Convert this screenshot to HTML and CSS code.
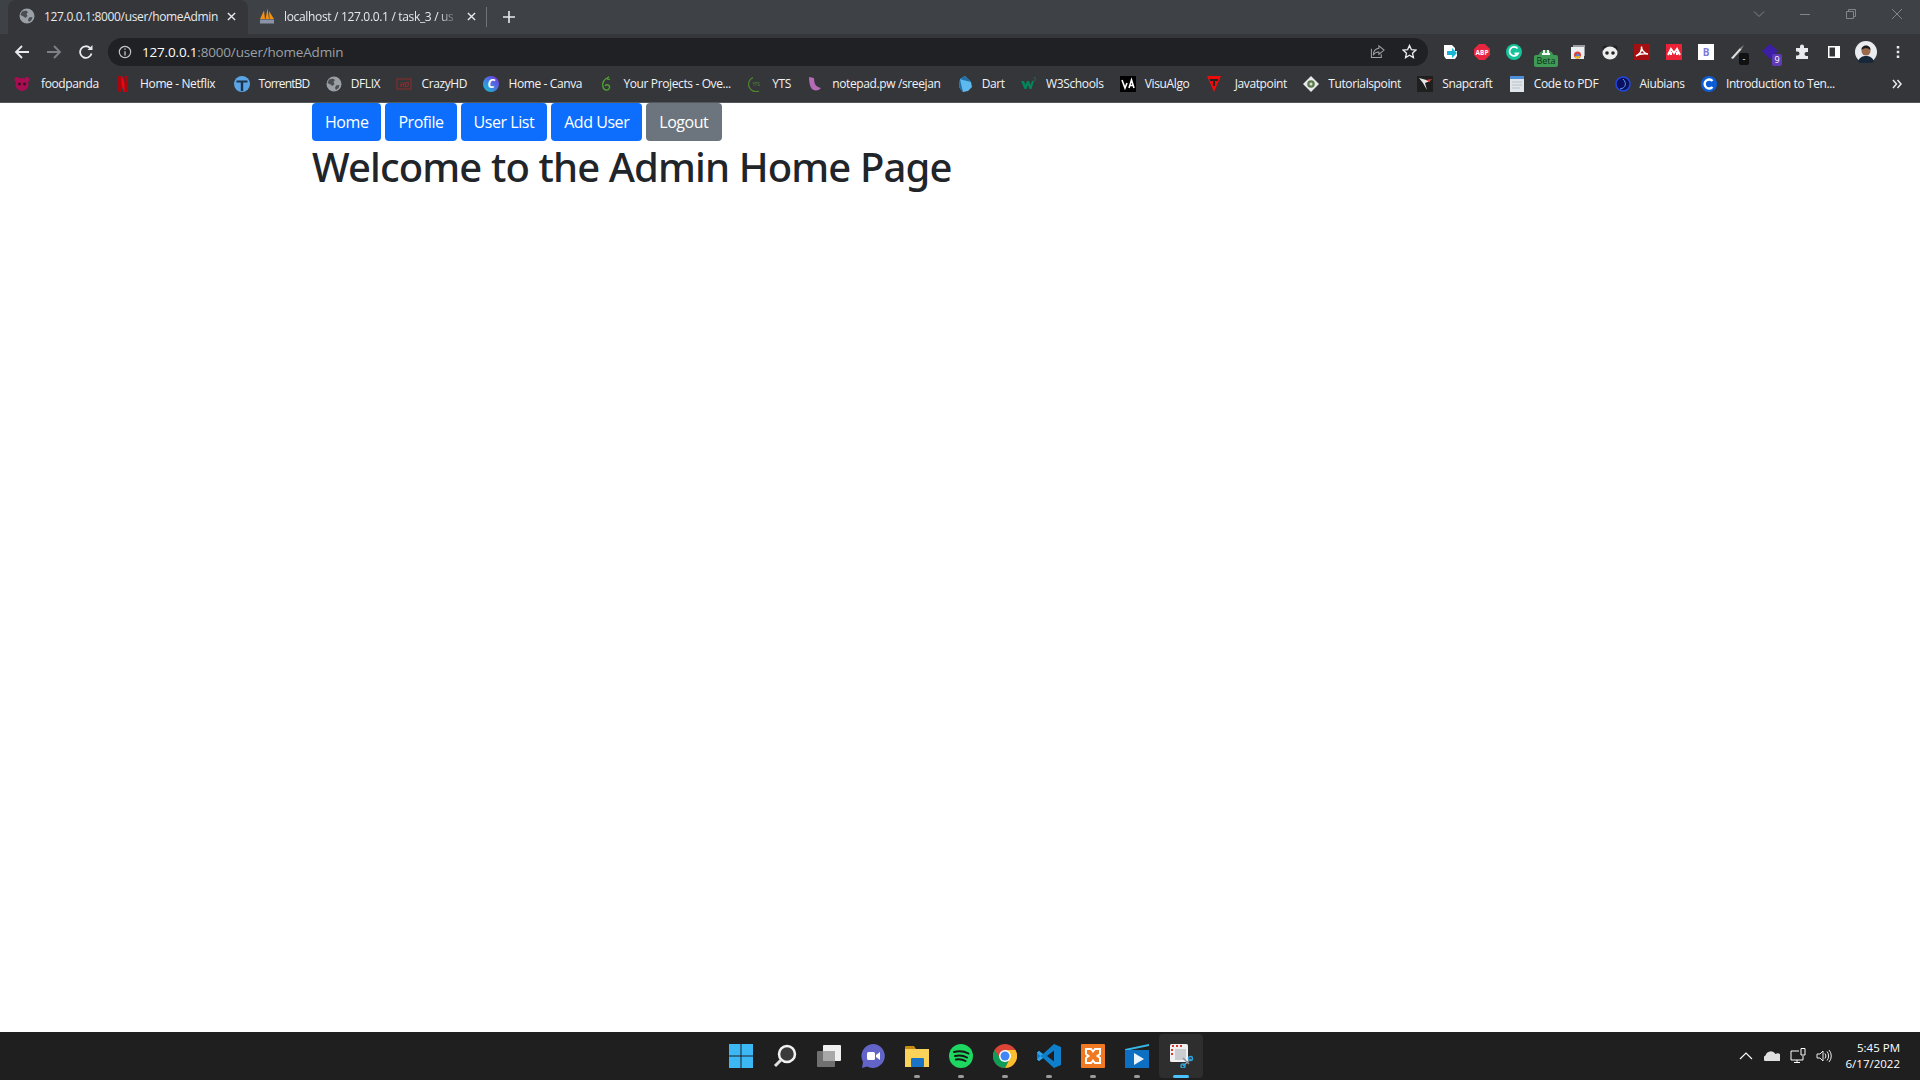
FILE: index.html
```html
<!DOCTYPE html>
<html lang="en">
    <head>
        <meta charset="utf-8">
        <title>127.0.0.1:8000/user/homeAdmin</title>
        <link rel="stylesheet" href="styles.css">
    </head>
    <body>
        <div class="browser">
            <!-- Tab strip -->
            <div class="tabstrip">
                <div class="tab tab-active">
                    <svg class="fav" viewBox="0 0 16 16"><circle cx="8" cy="8" r="7.5" fill="#9aa0a6"/><path d="M3 3.5 7 2.5 9 4 7.5 6 8.5 8 6.5 10 4.5 8.5 1.5 7ZM10 9.5 13.5 9 12.5 12 10 14 9 12Z" fill="#4a4d51"/></svg>
                    <span class="tab-title">127.0.0.1:8000/user/homeAdmin</span>
                    <svg class="tab-close" viewBox="0 0 10 10"><path d="M1 1 9 9M9 1 1 9" stroke="#e8eaed" stroke-width="1.5"/></svg>
                </div>
                <div class="tab">
                    <svg class="fav" viewBox="0 0 16 16"><path d="M1 11 5 2.500 6 11ZM6.500 11 8.500 .5 10 11ZM10.500 11 10 3 15 11Z" fill="#f29111"/><rect x="1" y="11.500" width="14" height="4" fill="#8a94a6"/></svg>
                    <span class="tab-title tab-fade">localhost / 127.0.0.1 / task_3 / us</span>
                    <svg class="tab-close" viewBox="0 0 10 10"><path d="M1 1 9 9M9 1 1 9" stroke="#e8eaed" stroke-width="1.5"/></svg>
                </div>
                <div class="tab-sep"></div>
                <svg class="new-tab" viewBox="0 0 12 12"><path d="M6 0V12M0 6H12" stroke="#e8eaed" stroke-width="1.6"/></svg>
                <div class="window-controls">
                    <svg viewBox="0 0 12 12"><path d="M1 3.500 6 8.500 11 3.500" fill="none" stroke="#80868b"/></svg>
                    <svg viewBox="0 0 12 12"><path d="M1 6.500H11" stroke="#80868b"/></svg>
                    <svg viewBox="0 0 12 12"><path d="M1.500 3.500H8.500V10.500H1.500ZM3.500 3.500V1.500H10.500V8.500H8.500" fill="none" stroke="#80868b"/></svg>
                    <svg viewBox="0 0 12 12"><path d="M1 1 11 11M11 1 1 11" stroke="#80868b"/></svg>
                </div>
            </div>

            <!-- Address bar and extensions -->
            <div class="toolbar">
                <svg class="nav" viewBox="0 0 16 16"><path d="M15 8H2M8 2 2 8 8 14" fill="none" stroke="#e8eaed" stroke-width="1.8"/></svg>
                <svg class="nav" viewBox="0 0 16 16"><path d="M1 8H14M8 2 14 8 8 14" fill="none" stroke="#7d8185" stroke-width="1.8"/></svg>
                <svg class="nav" viewBox="0 0 16 16"><path d="M13.500 9.500A5.800 5.800 0 1 1 12 4" fill="none" stroke="#e8eaed" stroke-width="1.8"/><path d="M9.500 6H14.500V1Z" fill="#e8eaed"/></svg>
                <div class="omnibox">
                    <svg class="info" viewBox="0 0 16 16"><circle cx="8" cy="8" r="6.500" fill="none" stroke="#c4c7c9" stroke-width="1.300"/><path d="M8 7V12M8 4V5.500" stroke="#c4c7c9" stroke-width="1.500"/></svg>
                    <span class="url"><b>127.0.0.1</b>:8000/user/homeAdmin</span>
                    <svg class="omni-action" viewBox="0 0 16 16"><path d="M9.500 2 15 6.500 9.500 11V8.500C6.500 8.500 4.500 9.500 3.500 12 3.500 8 6 5 9.500 4.500ZM1.500 5V14.500H12V11" fill="none" stroke="#9fa3a7" stroke-width="1.100"/></svg>
                    <svg class="omni-action" viewBox="0 0 16 16"><path d="M8 1.500 10 6 14.800 6.500 11.200 9.800 12.200 14.500 8 12 3.800 14.500 4.800 9.800 1.200 6.500 6 6Z" fill="none" stroke="#e8eaed" stroke-width="1.400"/></svg>
                </div>
                <div class="extensions">
                    <span class="ext"><svg viewBox="0 0 16 16"><path d="M2 1H10L13 4V7H15V12L13 15H4L2 12Z" fill="#fff"/><path d="M5 7H10V4L15 9 10 14V11H5Z" fill="#19b5d8"/></svg></span>
                    <span class="ext"><svg viewBox="0 0 16 16"><path d="M5 0H11L16 5V11L11 16H5L0 11V5Z" fill="#e8263f"/><text x="8" y="10.500" class="ext-text">ABP</text></svg></span>
                    <span class="ext"><svg viewBox="0 0 16 16"><circle cx="8" cy="8" r="8" fill="#15c39a"/><path d="M11.500 4.500A4.500 4.500 0 1 0 12 9.500H8.500" fill="none" stroke="#fff" stroke-width="1.800"/></svg></span>
                    <span class="ext ext-beta"><svg viewBox="0 0 16 16"><path d="M0 14A8 8 0 0 1 16 14Z" fill="#3f9a56"/><path d="M6 6V10M10 6V10M4 10H12" stroke="#fff" stroke-width="1.800"/></svg><span class="badge-beta">Beta</span></span>
                    <span class="ext"><svg viewBox="0 0 16 16"><rect x="3" y="1" width="12" height="11" fill="#9a9da0"/><rect x="1" y="3" width="13" height="12" fill="#eceff1"/><circle cx="7.500" cy="11" r="3.500" fill="#e34133"/><path d="M7.500 11 4.500 13 7 15 11 12.500Z" fill="#f4c20d"/><circle cx="7.500" cy="11" r="1.500" fill="#4285f4"/></svg></span>
                    <span class="ext"><svg viewBox="0 0 16 16"><circle cx="3" cy="4" r="2.500" fill="#222"/><circle cx="13" cy="4" r="2.500" fill="#222"/><ellipse cx="8" cy="9" rx="7.500" ry="6.500" fill="#eee"/><circle cx="5" cy="9" r="1.800" fill="#222"/><circle cx="11" cy="9" r="1.800" fill="#222"/></svg></span>
                    <span class="ext"><svg viewBox="0 0 16 16"><rect width="16" height="16" fill="#a50f0f"/><path d="M2 12C6 10 8 6 7.500 2.500 7 6 11 10 14 10 10 9.500 5 10 2 12Z" fill="none" stroke="#fff" stroke-width="1.500"/></svg></span>
                    <span class="ext"><svg viewBox="0 0 16 16"><rect width="16" height="16" fill="#ec2136"/><path d="M2 11 5 5 8 9 11 5 14 11M5 11V8M11 11V8" fill="none" stroke="#fff" stroke-width="2"/></svg></span>
                    <span class="ext"><svg viewBox="0 0 16 16"><rect width="16" height="16" fill="#fff"/><text x="8" y="11.500" class="ext-b">B</text></svg></span>
                    <span class="ext ext-knife"><svg viewBox="0 0 16 16"><path d="M1 14 10 4 11.500 5.500 3 15Z" fill="#ddd"/><path d="M10 4 14 1 11.500 5.500Z" fill="#888"/></svg><span class="badge-dark">-</span></span>
                    <span class="ext ext-purple"><svg viewBox="0 0 16 16"><path d="M8 0 16 7 8 15 0 7Z" fill="#3c1fa6"/></svg><span class="badge-num">9</span></span>
                    <span class="ext"><svg viewBox="0 0 16 16"><path d="M6 2.500A2 2 0 0 1 10 2.500V4H14V8H12.500A2 2 0 0 0 12.500 12H14V15H2V11.500H3.500A2 2 0 0 0 3.500 7.500H2V4H6Z" fill="#e8eaed"/></svg></span>
                    <span class="ext"><svg viewBox="0 0 16 16"><path d="M2 2H14V14H2ZM3.500 3.500V12.500H9V3.500Z" fill="#fff" fill-rule="evenodd"/></svg></span>
                    <span class="ext"><svg class="avatar" viewBox="0 0 22 22"><circle cx="11" cy="11" r="11" fill="#e9edf0"/><path d="M3 21C4 16 8 15 11 15 14 15 18 16 19 21 15 23 7 23 3 21Z" fill="#17283a"/><circle cx="11" cy="10" r="4.500" fill="#9a6a4d"/><path d="M6.500 9C6 3 16 3 15.500 9 13 6.500 9 6.500 6.500 9Z" fill="#1c1a1a"/></svg></span>
                    <span class="ext"><svg viewBox="0 0 16 16"><path d="M8 2V4.500M8 6.800V9.300M8 11.500V14" stroke="#e8eaed" stroke-width="2.500"/></svg></span>
                </div>
            </div>

            <!-- Bookmarks bar -->
            <div class="bookmarks">
                <span class="bm bm-spaced"><svg viewBox="0 0 16 16"><circle cx="3" cy="3.500" r="2.500" fill="#a90e52"/><circle cx="13" cy="3.500" r="2.500" fill="#a90e52"/><circle cx="8" cy="8.500" r="6.500" fill="#a90e52"/><circle cx="5.500" cy="8" r="1.500" fill="#3a1020"/><circle cx="10.500" cy="8" r="1.500" fill="#3a1020"/></svg>foodpanda</span>
                <span class="bm"><svg viewBox="0 0 16 16"><path d="M3 0H7L13 16H9Z" fill="#e50914"/><path d="M3 0H6.500V16L3 15.500ZM9.500 0H13V15.500L9.500 16Z" fill="#a80710"/></svg>Home - Netflix</span>
                <span class="bm bm-narrow"><svg viewBox="0 0 16 16"><circle cx="8" cy="8" r="8" fill="#5ba5e6"/><path d="M2.500 4.500H13.500V6.500H9.200V15H6.800V6.500H2.500Z" fill="#1f3346"/></svg>TorrentBD</span>
                <span class="bm"><svg viewBox="0 0 16 16"><circle cx="8" cy="8" r="7.500" fill="#9aa0a6"/><path d="M3 3.500 7 2.500 9 4 7.500 6 8.500 8 6.500 10 4.500 8.500 1.500 7ZM10 9.500 13.500 9 12.500 12 10 14 9 12Z" fill="#4a4d51"/></svg>DFLIX</span>
                <span class="bm"><svg viewBox="0 0 16 16"><rect x="1" y="3" width="14" height="10" fill="none" stroke="#8c2a2a"/><text x="8" y="11" class="bm-hd">HD</text></svg>CrazyHD</span>
                <span class="bm"><svg viewBox="0 0 16 16"><defs><linearGradient id="canva" x1="0" y1="1" x2="1" y2="0"><stop offset="0" stop-color="#12c8d4"/><stop offset="1" stop-color="#7d2ae8"/></linearGradient></defs><circle cx="8" cy="8" r="8" fill="url(#canva)"/><text x="8" y="12" class="bm-c">C</text></svg>Home - Canva</span>
                <span class="bm"><svg viewBox="0 0 16 16"><path d="M11 1C6 3 4 7 5 11 6 15 11 15 11.500 11.500 12 8.500 8 8 7 10M11 1C8 2 9 4 12 3" fill="none" stroke="#4ca82f" stroke-width="1.300"/></svg>Your Projects - Ove...</span>
                <span class="bm"><svg viewBox="0 0 16 16"><path d="M6 1.500A7 7 0 0 0 12 15" fill="none" stroke="#4f8a2e" stroke-width="1.200"/><text x="9" y="10" class="bm-yts">YTS</text></svg>YTS</span>
                <span class="bm"><svg viewBox="0 0 16 16"><path d="M2 1 7 2C7 8 9 11 14 12 12 15 7 15 5 13 3 11 2 6 2 1Z" fill="#b56bb5"/></svg>notepad.pw /sreejan</span>
                <span class="bm"><svg viewBox="0 0 16 16"><path d="M3 3 8 0 14 6 15 11 11 15 6 16 2 11Z" fill="#5db9ee"/><path d="M3 3 2 11 6 16 4 8ZM3 3 8 0 14 6 6 4Z" fill="#1f6fa8"/></svg>Dart</span>
                <span class="bm"><svg viewBox="0 0 16 16"><path d="M0 5H3L4.500 9 6 5H8L9.500 9 11 5H13L10.500 13H8.500L7 9 5.500 13H3.500Z" fill="#04845a"/><text x="13.500" y="5" class="bm-w3">3</text></svg>W3Schools</span>
                <span class="bm"><svg viewBox="0 0 16 16"><rect width="16" height="16" fill="#000"/><path d="M2 4 5 12 7 7M9 12 11.500 4 14 12M10 9.500H13" fill="none" stroke="#fff" stroke-width="1.600"/></svg>VisuAlgo</span>
                <span class="bm bm-spaced-more"><svg viewBox="0 0 16 16"><path d="M1 0H15L8 16Z" fill="#f00b0b"/><path d="M4 3H12V5H9V10H7V5H4Z" fill="#222"/></svg>Javatpoint</span>
                <span class="bm"><svg viewBox="0 0 16 16"><path d="M8 0 16 8 8 16 0 8Z" fill="#e9e9e9"/><circle cx="8" cy="8" r="3.800" fill="#5c7a4b"/><circle cx="8" cy="8" r="1.500" fill="#ddd"/></svg>Tutorialspoint</span>
                <span class="bm"><svg viewBox="0 0 16 16"><rect width="16" height="16" fill="#1f1f1f"/><path d="M2 2 13 5 8 7 10 14 6 7Z" fill="#e8e8e8"/><path d="M9 4 15 3 12 6Z" fill="#e23b2e"/></svg>Snapcraft</span>
                <span class="bm"><svg viewBox="0 0 16 16"><rect x="1" y="0" width="14" height="16" fill="#dfe5ea"/><rect x="1" y="0" width="14" height="3" fill="#4d8fd8"/><path d="M3 6H13M3 9H13M3 12H11" stroke="#b9c1c8"/></svg>Code to PDF</span>
                <span class="bm"><svg viewBox="0 0 16 16"><circle cx="8" cy="8" r="7" fill="#0b1160" stroke="#2346e0" stroke-width="1.500"/><path d="M5 13C11 12 12 7 8 3" fill="none" stroke="#5a9cf0"/></svg>Aiubians</span>
                <span class="bm"><svg viewBox="0 0 16 16"><circle cx="8" cy="8" r="8" fill="#0b5ed7"/><path d="M11.500 5A4.500 4.500 0 1 0 11.500 11" fill="none" stroke="#fff" stroke-width="2.400"/></svg>Introduction to Ten...</span>
                <svg class="bm-more" viewBox="0 0 10 10"><path d="M1 1 4.500 5 1 9M5.500 1 9 5 5.500 9" fill="none" stroke="#e8eaed" stroke-width="1.500"/></svg>
            </div>

            <main class="page">
                <nav class="page-nav">
                    <a class="btn" href="#">Home</a>
                    <a class="btn" href="#">Profile</a>
                    <a class="btn" href="#">User List</a>
                    <a class="btn" href="#">Add User</a>
                    <a class="btn btn-grey" href="#">Logout</a>
                </nav>
                <h1>Welcome to the Admin Home Page</h1>
            </main>

            <!-- Windows taskbar -->
            <footer class="taskbar">
                <div class="task-spacer"></div>
                <div class="task-apps">
                    <span class="app"><svg viewBox="0 0 24 24"><path d="M0 0H11.500V11.500H0ZM12.500 0H24V11.500H12.500ZM0 12.500H11.500V24H0ZM12.500 12.500H24V24H12.500Z" fill="#3cb9f5"/></svg></span>
                    <span class="app"><svg viewBox="0 0 24 24"><circle cx="14" cy="10" r="8" fill="#3a3a3a" stroke="#f2f2f2" stroke-width="2.500"/><path d="M8 16 2 22" stroke="#e0e0e0" stroke-width="3"/></svg></span>
                    <span class="app"><svg viewBox="0 0 24 24"><rect x="0" y="7" width="18" height="16" rx="1" fill="#707070"/><rect x="6" y="1" width="18" height="16" rx="1" fill="#f0f0f0"/><rect x="6" y="7" width="12" height="10" fill="#a8a8a8"/></svg></span>
                    <span class="app"><svg viewBox="0 0 24 24"><path d="M12 0A12 12 0 1 1 6 22.500L1 24 2 18A12 12 0 0 1 12 0Z" fill="#6264c7"/><rect x="6" y="8" width="8" height="8" rx="1.500" fill="#fff"/><path d="M15 11 19 8V16L15 13Z" fill="#fff"/></svg></span>
                    <span class="app app-open"><svg viewBox="0 0 24 24"><path d="M0 3A1 1 0 0 1 1 2H9L11 5H0Z" fill="#c98c12"/><path d="M0 5H24V23H0Z" fill="#fcd35a"/><rect x="6" y="14" width="13" height="9" rx="1" fill="#1a73c7"/></svg></span>
                    <span class="app app-open"><svg viewBox="0 0 24 24"><circle cx="12" cy="12" r="12" fill="#1ed760"/><path d="M5 8C10 6.500 15 7 19.500 9.500M6 12C10 11 14.500 11.500 18 13.500M7 15.500C10.500 15 14 15.500 16.500 17" fill="none" stroke="#191414" stroke-width="2" stroke-linecap="round"/></svg></span>
                    <span class="app app-open"><svg viewBox="0 0 24 24"><circle cx="12" cy="12" r="12" fill="#db4437"/><path d="M12 24A12 12 0 0 0 22.400 6H12L17 14Z" fill="#fbc02d"/><path d="M12 24 17 14 12 16 7 14 1.600 6A12 12 0 0 0 12 24Z" fill="#0f9d58"/><circle cx="12" cy="12" r="6" fill="#fff"/><circle cx="12" cy="12" r="4.500" fill="#4285f4"/></svg></span>
                    <span class="app app-open"><svg viewBox="0 0 24 24"><path d="M17 0 24 3V21L17 24 6 14 2 17 0 15.500V8.500L2 7 6 10Z" fill="#0f7fcc"/><path d="M17 6.500 10 12 17 17.500Z" fill="#1f1f1f"/><path d="M0 8.500 2 7 6 10 3.500 12 0 8.500ZM0 15.500 3.500 12 6 14 2 17Z" fill="#2ca5ea"/></svg></span>
                    <span class="app app-open"><svg viewBox="0 0 24 24"><rect width="24" height="24" rx="1" fill="#f07a23"/><path d="M5 5H10L12 7.500 14 5H19V10L16.500 12 19 14V19H14L12 16.500 10 19H5V14L7.500 12 5 10Z" fill="none" stroke="#fff" stroke-width="2"/></svg></span>
                    <span class="app app-open"><svg viewBox="0 0 24 24"><path d="M0 5 24 0V2L0 7Z" fill="#35b8e8"/><rect y="6" width="24" height="18" fill="#0d6fc2"/><path d="M9 9 19 15 9 21Z" fill="#e8f4fc"/></svg></span>
                    <span class="app app-active"><svg viewBox="0 0 24 24"><rect x="1" y="0" width="18" height="18" rx="1.500" fill="#f0f0f0"/><path d="M3 2H5M7 2H9M11 2H13M3 5V7M3 9V11" stroke="#d83b2d" stroke-width="2"/><rect x="6" y="5" width="11" height="11" fill="#c9cdd2"/><path d="M14 14 20 20M14 22 22 15" stroke="#8d949b" stroke-width="1.500"/><circle cx="21.500" cy="14.500" r="2" fill="none" stroke="#29a3e0" stroke-width="1.500"/><circle cx="14" cy="22" r="2" fill="none" stroke="#29a3e0" stroke-width="1.500"/></svg></span>
                </div>
                <div class="tray">
                    <svg class="tray-icon" viewBox="0 0 16 16"><path d="M2 11 8 5 14 11" fill="none" stroke="#fff" stroke-width="1.100"/></svg>
                    <svg class="tray-icon" viewBox="0 0 16 16"><path d="M1 13A3 3 0 0 1 1.500 7.500 5.500 5.500 0 0 1 11.500 6 4 4 0 0 1 15.500 13Z" fill="#e0e0e0"/></svg>
                    <svg class="tray-icon" viewBox="0 0 16 16"><path d="M9 3H1V12H13V8M4 14.500H10M7 12V14.500M11 .500H15V7H11Z" fill="none" stroke="#fff"/></svg>
                    <svg class="tray-icon" viewBox="0 0 16 16"><path d="M1 6H4L7 3V13L4 10H1ZM9 5.500A4 4 0 0 1 9 10.500M11 3.500A7 7 0 0 1 11 12.500M13 2A9 9 0 0 1 13 14" fill="none" stroke="#fff" stroke-width=".9"/></svg>
                    <div class="clock"><div>5:45 PM</div><div>6/17/2022</div></div>
                </div>
            </footer>
        </div>
    </body>
</html>
```

FILE: styles.css
```css
html {
    font-family: "Open Sans", sans-serif;
    color: #212529;
}

body {
    margin: 0;
}

svg {
    display: block;
    flex: none;
}

.browser {
    display: flex;
    flex-direction: column;
    height: 100vh;
    overflow: hidden;
}

/* tab strip */
.tabstrip {
    display: flex;
    align-items: flex-end;
    height: 34px;
    padding-left: 8px;
    background-color: #3e4246;
}

.tab {
    display: flex;
    align-items: center;
    box-sizing: border-box;
    width: 240px;
    height: 34px;
    padding: 0 12px 2px 11px;
    font-size: 12px;
    letter-spacing: -0.33px;
    color: #e8eaed;
}

.tab-active {
    background-color: #35363a;
    border-radius: 8px 8px 0 0;
}

.tab .fav {
    width: 16px;
    height: 16px;
    margin-right: 9px;
}

.tab-title {
    flex: 1;
    overflow: hidden;
    white-space: nowrap;
}

.tab-fade {
    -webkit-mask-image: linear-gradient(to right, #000 88%, transparent);
    mask-image: linear-gradient(to right, #000 88%, transparent);
}

.tab-close {
    width: 9px;
    height: 9px;
    margin-left: 8px;
}

.tab-sep {
    width: 1px;
    height: 20px;
    margin: 0 0 7px -2px;
    background-color: #70757a;
}

.new-tab {
    width: 12px;
    height: 12px;
    margin: 0 0 11px 16px;
}

.window-controls {
    display: flex;
    gap: 34px;
    margin: 0 17px 14px auto;
}

.window-controls svg {
    width: 12px;
    height: 12px;
}

/* toolbar */
.toolbar {
    display: flex;
    align-items: center;
    height: 35px;
    padding-left: 14px;
    background-color: #35363a;
}

.nav {
    width: 16px;
    height: 16px;
    margin-right: 16px;
}

.omnibox {
    display: flex;
    align-items: center;
    box-sizing: border-box;
    width: 1320px;
    height: 28px;
    margin-left: -2px;
    padding: 0 10px 0 10px;
    background-color: #202124;
    border-radius: 14px;
    font-size: 13.5px;
    letter-spacing: -0.18px;
    color: #9aa0a6;
}

.info {
    width: 14px;
    height: 14px;
    margin-right: 10px;
}

.url {
    flex: 1;
}

.url b {
    font-weight: 400;
    color: #fff;
}

.omni-action {
    width: 15px;
    height: 15px;
    margin-left: 17px;
}

.omni-action:last-child {
    margin-right: 1px;
}

.extensions {
    display: flex;
    margin-left: 6px;
}

.ext {
    position: relative;
    display: flex;
    align-items: center;
    justify-content: center;
    width: 32px;
    height: 32px;
}

.ext svg {
    width: 16px;
    height: 16px;
}

.ext svg.avatar {
    width: 22px;
    height: 22px;
}

.ext-text {
    font-size: 6.5px;
    font-weight: 700;
    text-anchor: middle;
    fill: #fff;
}

.ext-b {
    font-size: 10px;
    font-weight: 700;
    text-anchor: middle;
    fill: #7d7ad6;
}

.badge-beta,
.badge-dark,
.badge-num {
    position: absolute;
    display: block;
    font-size: 9px;
    line-height: 12px;
    text-align: center;
    border-radius: 2px;
}

.badge-beta {
    left: 4px;
    right: 4px;
    bottom: 1px;
    color: #10301a;
    background-color: #3f9a56;
}

.badge-dark {
    right: 5px;
    bottom: 3px;
    width: 10px;
    color: #fff;
    background-color: #111;
}

.badge-num {
    right: 4px;
    bottom: 2px;
    width: 10px;
    color: #fff;
    background-color: #5f3bb8;
}

/* bookmarks */
.bookmarks {
    display: flex;
    align-items: center;
    box-sizing: border-box;
    height: 34px;
    padding: 0 0 4px 14px;
    background-color: #35363a;
    border-bottom: 1px solid #55585b;
    font-size: 12px;
    letter-spacing: -0.38px;
    color: #f1f3f4;
}

.bm {
    display: flex;
    align-items: center;
    margin-right: 16.3px;
    white-space: nowrap;
}

.bm svg {
    width: 16px;
    height: 16px;
    margin-right: 9px;
}

.bm-spaced svg {
    margin-right: 11px;
}

.bm-spaced-more svg {
    margin-right: 13px;
}

.bm-narrow {
    margin-left: 2px;
    letter-spacing: -0.85px;
}

.bm-hd {
    font-size: 7px;
    font-weight: 700;
    font-style: italic;
    text-anchor: middle;
    fill: #8c2a2a;
}

.bm-c {
    font-size: 12px;
    font-weight: 700;
    font-style: italic;
    text-anchor: middle;
    fill: #fff;
}

.bm-yts {
    font-size: 5px;
    text-anchor: middle;
    fill: #4f8a2e;
}

.bm-w3 {
    font-size: 5px;
    text-anchor: middle;
    fill: #04845a;
}

.bm-more {
    width: 10px;
    height: 10px;
    margin-left: auto;
    margin-right: 18px;
}

/* page */
.page {
    flex: 1;
    padding-left: 312px;
    background-color: #fff;
}

.page-nav {
    display: flex;
    gap: 4px;
}

.btn {
    padding: 6px 13px;
    font-size: 16px;
    line-height: 26px;
    letter-spacing: -0.45px;
    color: #fff;
    text-decoration: none;
    background-color: #0d6efd;
    border-radius: 4px;
}

.btn-grey {
    padding-right: 14px;
    background-color: #6c757d;
}

h1 {
    margin: 2px 0 0;
    font-family: "Noto Sans", sans-serif;
    font-size: 40px;
    font-weight: 500;
    line-height: 48px;
    letter-spacing: -0.87px;
    color: #212529;
}

/* taskbar */
.taskbar {
    display: grid;
    grid-template-columns: 1fr auto 1fr;
    align-items: center;
    height: 48px;
    background-color: #1f1f1f;
    color: #fff;
}

.task-apps {
    display: flex;
    padding-left: 2px;
}

.app {
    position: relative;
    display: flex;
    align-items: center;
    justify-content: center;
    width: 44px;
    height: 44px;
}

.app svg {
    width: 24px;
    height: 24px;
}

.app-open::after,
.app-active::after {
    content: "";
    position: absolute;
    bottom: 0;
    left: 50%;
    width: 6px;
    height: 3px;
    margin-left: -3px;
    background-color: #9a9a9a;
    border-radius: 2px;
}

.app-active {
    background-color: #2e2e2e;
    border-radius: 4px;
}

.app-active::after {
    width: 16px;
    margin-left: -8px;
    background-color: #4cc2ff;
}

.tray {
    display: flex;
    align-items: center;
    justify-content: flex-end;
    gap: 10px;
    padding-right: 20px;
}

.tray-icon {
    width: 16px;
    height: 16px;
}

.clock {
    margin-left: 4px;
    font-size: 11.5px;
    line-height: 16px;
    text-align: right;
}
```
